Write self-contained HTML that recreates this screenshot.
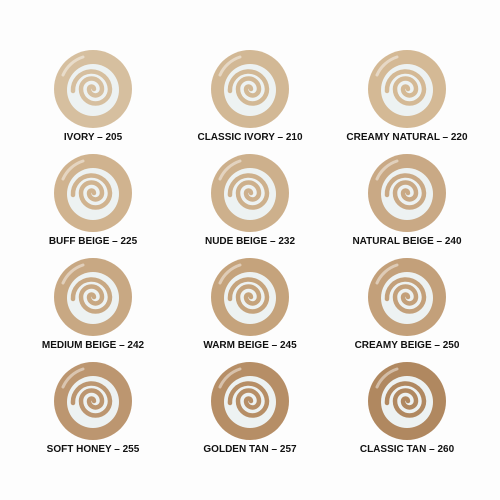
<!DOCTYPE html><html><head><style>
body{margin:0;width:500px;height:500px;background:#fdfdfd;position:relative;overflow:hidden;font-family:"Liberation Sans",sans-serif}
.s{position:absolute;width:80px;height:80px}
.l{position:absolute;width:160px;text-align:center;font-weight:bold;font-size:10px;color:#111}
</style></head><body>
<svg width="0" height="0" style="position:absolute"><defs>
<symbol id="sw" viewBox="-40 -40 80 80">
<circle r="39" fill="currentColor"/>
<circle r="26" cx="0" cy="1" fill="#edf2f2"/>
<path d="M1 0 A2.5 2.5 0 0 0 -4 0 A6.5 6.5 0 0 0 9 0 A10.5 10.5 0 0 0 -12 0 A14.5 14.5 0 0 0 17 0 A18.5 18.5 0 0 0 -20 2" fill="none" stroke="currentColor" stroke-width="4.5" stroke-linecap="round"/>
<path d="M-30 -14 A33 33 0 0 1 -10 -32" fill="none" stroke="#fff" stroke-opacity=".45" stroke-width="3" stroke-linecap="round"/>
</symbol></defs></svg>
<svg class="s" style="left:53px;top:49px;color:#d6bf9f"><use href="#sw"/></svg>
<svg class="s" style="left:210px;top:49px;color:#d2b895"><use href="#sw"/></svg>
<svg class="s" style="left:367px;top:49px;color:#d4b995"><use href="#sw"/></svg>
<svg class="s" style="left:53px;top:153px;color:#d0b38f"><use href="#sw"/></svg>
<svg class="s" style="left:210px;top:153px;color:#cdb08c"><use href="#sw"/></svg>
<svg class="s" style="left:367px;top:153px;color:#c9a985"><use href="#sw"/></svg>
<svg class="s" style="left:53px;top:257px;color:#c8a883"><use href="#sw"/></svg>
<svg class="s" style="left:210px;top:257px;color:#c5a37c"><use href="#sw"/></svg>
<svg class="s" style="left:367px;top:257px;color:#c3a07a"><use href="#sw"/></svg>
<svg class="s" style="left:53px;top:361px;color:#bc9670"><use href="#sw"/></svg>
<svg class="s" style="left:210px;top:361px;color:#b68e66"><use href="#sw"/></svg>
<svg class="s" style="left:367px;top:361px;color:#b08860"><use href="#sw"/></svg>
<div class="l" style="left:13px;top:132px">IVORY – 205</div>
<div class="l" style="left:170px;top:132px">CLASSIC IVORY – 210</div>
<div class="l" style="left:327px;top:132px">CREAMY NATURAL – 220</div>
<div class="l" style="left:13px;top:236px">BUFF BEIGE – 225</div>
<div class="l" style="left:170px;top:236px">NUDE BEIGE – 232</div>
<div class="l" style="left:327px;top:236px">NATURAL BEIGE – 240</div>
<div class="l" style="left:13px;top:340px">MEDIUM BEIGE – 242</div>
<div class="l" style="left:170px;top:340px">WARM BEIGE – 245</div>
<div class="l" style="left:327px;top:340px">CREAMY BEIGE – 250</div>
<div class="l" style="left:13px;top:444px">SOFT HONEY – 255</div>
<div class="l" style="left:170px;top:444px">GOLDEN TAN – 257</div>
<div class="l" style="left:327px;top:444px">CLASSIC TAN – 260</div>
</body></html>
